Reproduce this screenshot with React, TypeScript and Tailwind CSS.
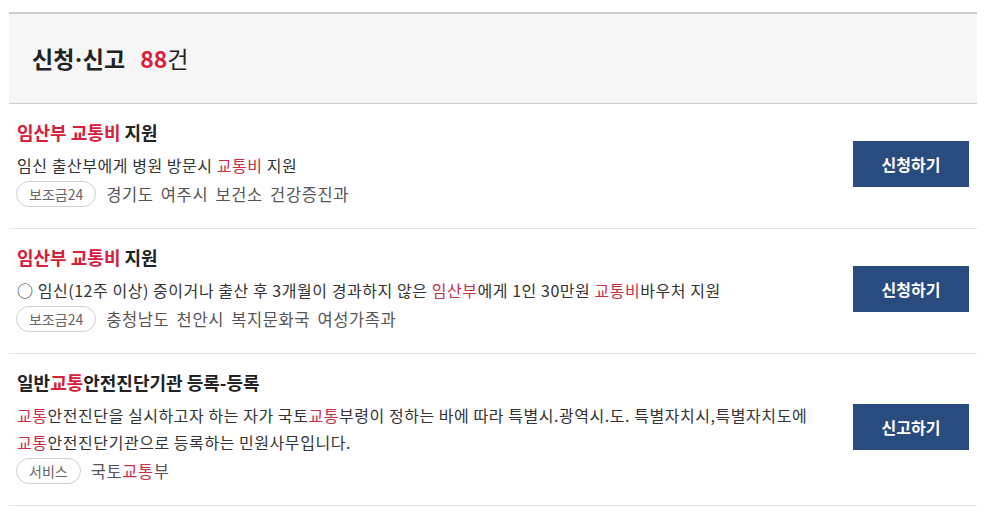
import React from "react";

const RED = "text-[#d6203b]";

type Part = string | { hl: string };

type Item = {
  title: Part[];
  desc: Part[][];
  tag: string;
  org: Part[];
  action: string;
};

const items: Item[] = [
  {
    title: [{ hl: "임산부 교통비" }, " 지원"],
    desc: [["임신 출산부에게 병원 방문시 ", { hl: "교통비" }, " 지원"]],
    tag: "보조금24",
    org: ["경기도 여주시 보건소 건강증진과"],
    action: "신청하기",
  },
  {
    title: [{ hl: "임산부 교통비" }, " 지원"],
    desc: [
      [
        "○ 임신(12주 이상) 중이거나 출산 후 3개월이 경과하지 않은 ",
        { hl: "임산부" },
        "에게 1인 30만원 ",
        { hl: "교통비" },
        "바우처 지원",
      ],
    ],
    tag: "보조금24",
    org: ["충청남도 천안시 복지문화국 여성가족과"],
    action: "신청하기",
  },
  {
    title: ["일반", { hl: "교통" }, "안전진단기관 등록-등록"],
    desc: [
      [
        { hl: "교통" },
        "안전진단을 실시하고자 하는 자가 국토",
        { hl: "교통" },
        "부령이 정하는 바에 따라 특별시.광역시.도. 특별자치시,특별자치도에",
      ],
      [{ hl: "교통" }, "안전진단기관으로 등록하는 민원사무입니다."],
    ],
    tag: "서비스",
    org: ["국토", { hl: "교통" }, "부"],
    action: "신고하기",
  },
];

function Text({ parts, hlClass }: { parts: Part[]; hlClass: string }) {
  return (
    <>
      {parts.map((p, i) =>
        typeof p === "string" ? (
          <span key={i}>{p}</span>
        ) : (
          <span key={i} className={hlClass}>
            {p.hl}
          </span>
        )
      )}
    </>
  );
}

function Row({ item }: { item: Item }) {
  return (
    <li className="flex items-center border-b border-[#e3e3e3] pl-2 pr-2 pt-[16px] pb-[21px]">
      <div className="flex-1 min-w-0">
        <h3 className="text-[18px] font-bold leading-[24px] text-[#222] mb-[8px]">
          <Text parts={item.title} hlClass={RED} />
        </h3>
        {item.desc.map((line, i) => (
          <p key={i} className="text-[16px] leading-[27px] tracking-[0.55px] text-[#333] whitespace-nowrap">
            <Text parts={line} hlClass="text-[#c8304a]" />
          </p>
        ))}
        <div className="flex items-center mt-[2px]">
          <span className="h-[26px] px-[12px] -ml-[1px] flex items-center rounded-full border border-[#cfcfcf] text-[14px] text-[#666]">
            {item.tag}
          </span>
          <span className="ml-[10px] text-[16.5px] tracking-[0.6px] [word-spacing:3px] text-[#555]">
            <Text parts={item.org} hlClass="text-[#c8304a]" />
          </span>
        </div>
      </div>
      <button className="w-[116px] h-[46px] bg-[#2a4b7e] text-white text-[16px] font-bold shrink-0">
        {item.action}
      </button>
    </li>
  );
}

export default function App() {
  return (
    <div
      className="bg-white min-h-screen pt-[12px]"
      style={{ fontFamily: '"Noto Sans CJK KR", "Noto Sans", sans-serif' }}
    >
      <div className="ml-[9px] w-[968px]">
        <div className="h-[92px] border-t-2 border-b border-t-[#cccccc] border-b-[#cccccc] bg-[#f6f6f6] flex items-center pl-[23px]">
          <h2 className="text-[23px] font-bold text-[#222]">
            신청
            <span className="mx-[1px]" style={{ fontFamily: '"Noto Sans", sans-serif' }}>
              ·
            </span>
            신고
            <span className={`ml-[15px] ${RED}`}>88</span>
            <span className="font-normal">건</span>
          </h2>
        </div>
        <ul>
          {items.map((it, i) => (
            <Row key={i} item={it} />
          ))}
        </ul>
      </div>
    </div>
  );
}
